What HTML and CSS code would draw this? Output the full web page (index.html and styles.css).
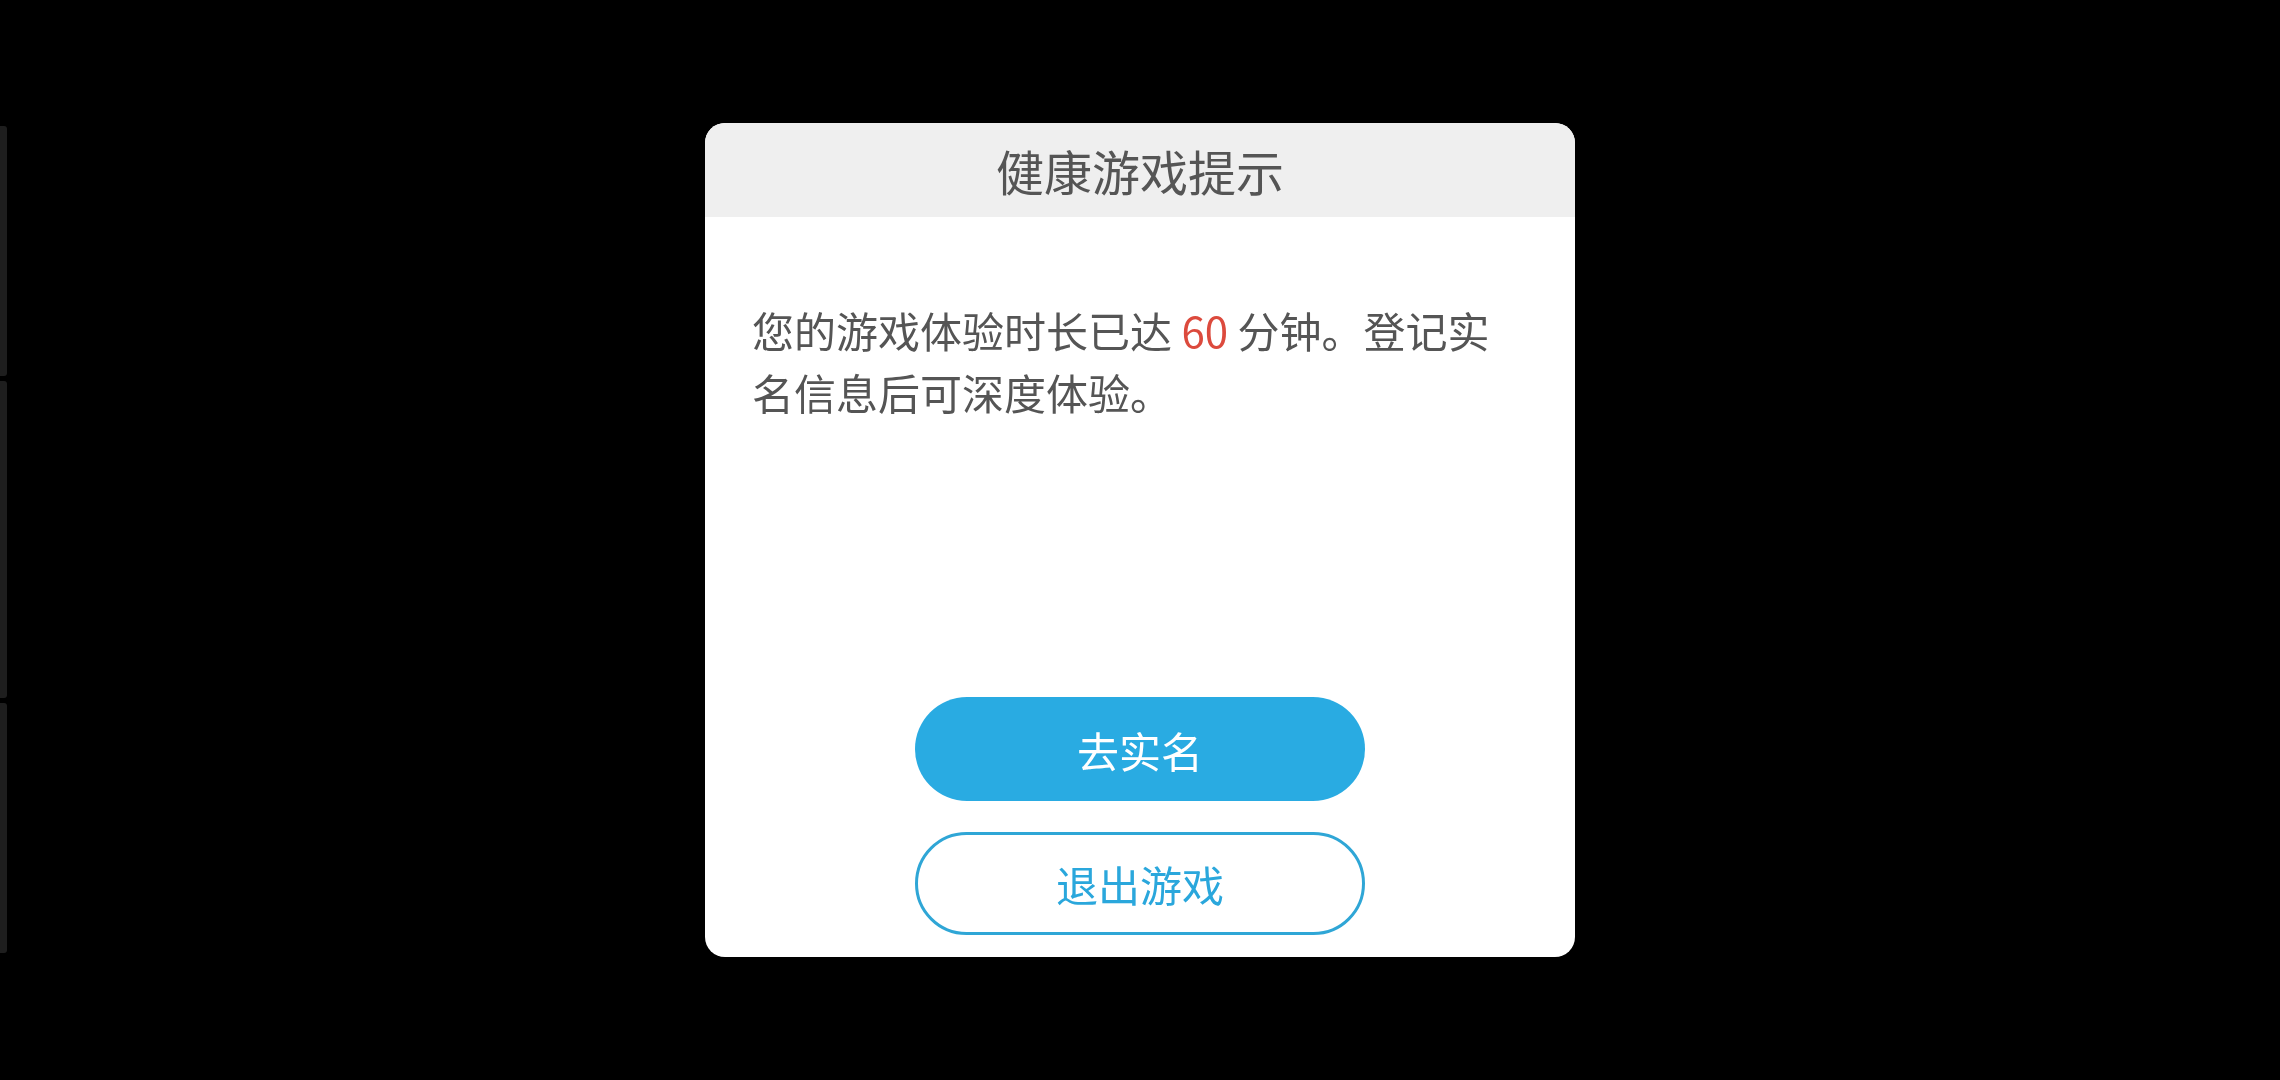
FILE: index.html
```html
<!DOCTYPE html>
<html lang="zh-CN">
<head>
<meta charset="utf-8">
<title>健康游戏提示</title>
<link rel="stylesheet" href="styles.css">
</head>
<body>
<div class="page">
  <div class="side-strip">
    <div class="strip-bar bar-1"></div>
    <div class="strip-bar bar-2"></div>
    <div class="strip-bar bar-3"></div>
  </div>
</div>
<div class="overlay">
  <div class="dialog">
    <div class="dialog-header">健康游戏提示</div>
    <div class="dialog-body">
      <p class="message">您的游戏体验时长已达 <span class="highlight">60</span> 分钟。登记实名信息后可深度体验。</p>
    </div>
    <div class="dialog-actions">
      <button class="btn btn-primary">去实名</button>
      <button class="btn btn-outline">退出游戏</button>
    </div>
  </div>
</div>
</body>
</html>
```

FILE: styles.css
```css
html, body {
  margin: 0;
  padding: 0;
  background: #000;
  width: 2280px;
  height: 1080px;
  overflow: hidden;
  font-family: "Noto Sans CJK SC", "Noto Sans", sans-serif;
}

.page {
  width: 2280px;
  height: 1080px;
  display: flex;
}

.side-strip {
  width: 7px;
  padding-top: 126px;
  display: flex;
  flex-direction: column;
  gap: 5px;
}

.strip-bar {
  background: #1e1e1e;
  border-radius: 0 3px 3px 0;
}

.bar-1 { height: 250px; }
.bar-2 { height: 317px; }
.bar-3 { height: 250px; }

.overlay {
  position: fixed;
  inset: 0;
  display: flex;
  align-items: center;
  justify-content: center;
}

.dialog {
  width: 870px;
  height: 834px;
  background: #fff;
  border-radius: 20px;
  overflow: hidden;
  display: flex;
  flex-direction: column;
}

.dialog-header {
  height: 94px;
  background: #efefef;
  color: #555;
  font-size: 48px;
  display: flex;
  align-items: center;
  justify-content: center;
  flex-shrink: 0;
}

.dialog-body {
  flex: 1;
  padding: 82px 47px 0;
}

.message {
  margin: 0;
  font-size: 42px;
  line-height: 62px;
  color: #555;
}

.highlight {
  color: #dc4a3d;
}

.dialog-actions {
  display: flex;
  flex-direction: column;
  align-items: center;
  gap: 31px;
  padding-bottom: 22px;
}

.btn {
  width: 450px;
  height: 104px;
  border-radius: 52px;
  font-family: "Noto Sans CJK SC", "Noto Sans", sans-serif;
  font-size: 42px;
  display: flex;
  align-items: center;
  justify-content: center;
  padding: 0;
  box-sizing: border-box;
  cursor: pointer;
}

.btn-primary {
  background: #29abe2;
  color: #fff;
  border: none;
}

.btn-outline {
  height: 103px;
  background: #fff;
  color: #2aa7dc;
  border: 3px solid #2fa6d6;
}
```
